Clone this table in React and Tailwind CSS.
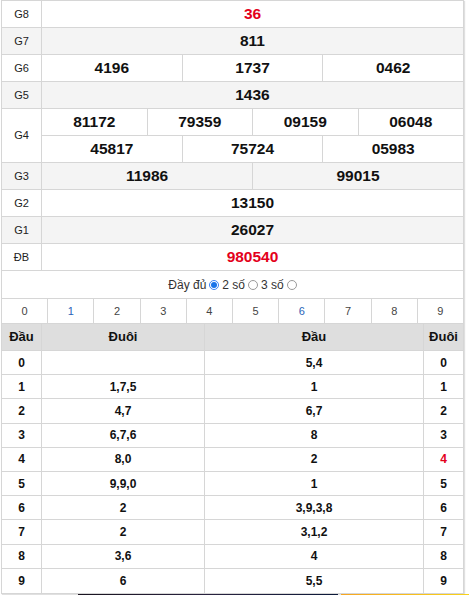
import React from "react";

const B = "border-[#d6d6d6]";

function Row({ label, gray, children, tall }) {
  return (
    <div className={`flex ${tall ? "h-[54px]" : "h-[27px]"} border-b ${B} ${gray ? "bg-[#f4f4f4]" : "bg-white"}`}>
      <div className={`w-[40px] shrink-0 border-r ${B} flex items-center justify-center text-[11px] text-[#222]`}>{label}</div>
      <div className="flex-1 flex flex-col">{children}</div>
    </div>
  );
}

function Cells({ items, red }) {
  return (
    <div className="flex flex-1">
      {items.map((n, i) => (
        <div
          key={i}
          className={`flex-1 flex items-center justify-center text-[15.5px] font-bold ${i > 0 ? `border-l ${B}` : ""} ${red ? "text-[#e3001b]" : "text-[#111]"}`}
        >
          {n}
        </div>
      ))}
    </div>
  );
}

const loto = [
  ["0", "", "5,4", "0"],
  ["1", "1,7,5", "1", "1"],
  ["2", "4,7", "6,7", "2"],
  ["3", "6,7,6", "8", "3"],
  ["4", "8,0", "2", "4"],
  ["5", "9,9,0", "1", "5"],
  ["6", "2", "3,9,3,8", "6"],
  ["7", "2", "3,1,2", "7"],
  ["8", "3,6", "4", "8"],
  ["9", "6", "5,5", "9"],
];

export default function App() {
  return (
    <div className="w-[469px] h-[595px] bg-white relative overflow-hidden" style={{ fontFamily: '"Liberation Sans", Arial, sans-serif' }}>
      <div className={`ml-[1px] w-[463px] border ${B} shadow-[1px_1px_1px_rgba(0,0,0,0.12)]`}>
        <Row label="G8"><Cells items={["36"]} red /></Row>
        <Row label="G7" gray><Cells items={["811"]} /></Row>
        <Row label="G6"><Cells items={["4196", "1737", "0462"]} /></Row>
        <Row label="G5" gray><Cells items={["1436"]} /></Row>
        <Row label="G4" tall>
          <div className={`flex flex-1 border-b ${B}`}><Cells items={["81172", "79359", "09159", "06048"]} /></div>
          <Cells items={["45817", "75724", "05983"]} />
        </Row>
        <Row label="G3" gray><Cells items={["11986", "99015"]} /></Row>
        <Row label="G2"><Cells items={["13150"]} /></Row>
        <Row label="G1" gray><Cells items={["26027"]} /></Row>
        <Row label="ĐB"><Cells items={["980540"]} red /></Row>

        <div className={`h-[28px] flex items-center justify-center text-[12px] text-[#333] border-b ${B}`}>
          <span>Đầy đủ</span>
          <span className="ml-[3px] w-[10px] h-[10px] rounded-full border border-[#3b82f6] bg-white flex items-center justify-center">
            <span className="w-[6px] h-[6px] rounded-full bg-[#1a73e8]" />
          </span>
          <span className="ml-[3px]">2 số</span>
          <span className="ml-[3px] w-[10px] h-[10px] rounded-full border border-[#9a9a9a] bg-white" />
          <span className="ml-[3px]">3 số</span>
          <span className="ml-[3px] w-[10px] h-[10px] rounded-full border border-[#9a9a9a] bg-white" />
        </div>

        <div className={`h-[25px] flex border-b ${B}`}>
          {["0", "1", "2", "3", "4", "5", "6", "7", "8", "9"].map((d, i) => (
            <div
              key={d}
              className={`flex-1 flex items-center justify-center text-[11px] ${i > 0 ? `border-l ${B}` : ""} ${d === "1" || d === "6" ? "text-[#2a62b8]" : "text-[#444]"}`}
            >
              {d}
            </div>
          ))}
        </div>

        <div className={`h-[27px] flex bg-[#dedede] border-b ${B} text-[13px] font-bold text-[#111]`}>
          <div className={`w-[40px] border-r ${B} flex items-center justify-center`}>Đầu</div>
          <div className={`w-[163px] border-r ${B} flex items-center justify-center`}>Đuôi</div>
          <div className={`w-[219px] border-r ${B} flex items-center justify-center`}>Đầu</div>
          <div className="flex-1 flex items-center justify-center">Đuôi</div>
        </div>

        {loto.map((r, i) => (
          <div key={i} className={`h-[24.2px] flex ${i < 9 ? `border-b ${B}` : ""} text-[12px] font-bold text-[#111]`}>
            <div className={`w-[40px] border-r ${B} flex items-center justify-center`}>{r[0]}</div>
            <div className={`w-[163px] border-r ${B} flex items-center justify-center`}>{r[1]}</div>
            <div className={`w-[219px] border-r ${B} flex items-center justify-center`}>{r[2]}</div>
            <div className={`flex-1 flex items-center justify-center ${r[3] === "4" ? "text-[#e3001b]" : ""}`}>{r[3]}</div>
          </div>
        ))}
      </div>
      <div className="flex h-[4px]">
        <div className="w-[78px]" />
        <div className="w-[260px] bg-gradient-to-r from-[#1a1420] via-[#2a2340] to-[#0c1a3a]" />
        <div className="w-[3px]" />
        <div className="flex-1 bg-gradient-to-r from-[#f5a623] to-[#f7d21a]" />
      </div>
    </div>
  );
}
